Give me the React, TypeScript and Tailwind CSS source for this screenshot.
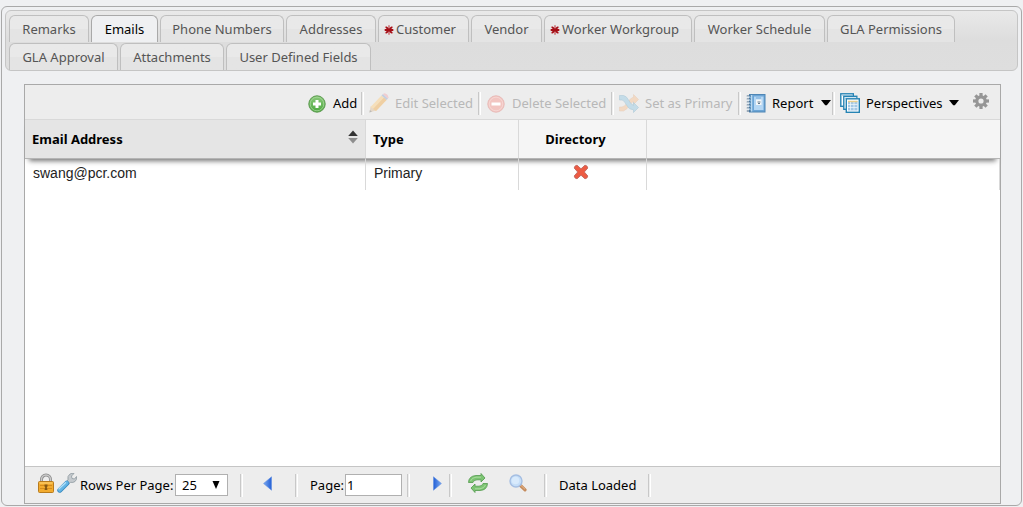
import { useState, type ReactNode } from "react";

type Tab = { label: string; width: string; required?: boolean };

const tabRows: Tab[][] = [
  [
    { label: "Remarks", width: "w-[80px]" },
    { label: "Emails", width: "w-[67px]" },
    { label: "Phone Numbers", width: "w-[124px]" },
    { label: "Addresses", width: "w-[90px]" },
    { label: "Customer", width: "w-[91px]", required: true },
    { label: "Vendor", width: "w-[71px]" },
    { label: "Worker Workgroup", width: "w-[148px]", required: true },
    { label: "Worker Schedule", width: "w-[131px]" },
    { label: "GLA Permissions", width: "w-[128px]" },
  ],
  [
    { label: "GLA Approval", width: "w-[109px]" },
    { label: "Attachments", width: "w-[104px]" },
    { label: "User Defined Fields", width: "w-[145px]" },
  ],
];

function RequiredMark() {
  return (
    <svg width="10" height="10" viewBox="0 0 10 10" className="mt-[2px] shrink-0" aria-hidden="true">
      <path d="M5 .3v9.400M.3 5h9.400M1.400 1.600l7.200 6.800M1.400 8.400l7.200-6.800" stroke="#cf7d80" strokeWidth="1.800" />
      <path d="M2.200 2l5.600 6M2.200 8l5.600-6M1 5h8" stroke="#a40d15" strokeWidth="1.800" />
    </svg>
  );
}

function AddIcon() {
  return (
    <svg width="20" height="20" viewBox="0 0 20 20" aria-hidden="true">
      <defs>
        <linearGradient id="add" x1="0" y1="0" x2="0" y2="1">
          <stop offset="0" stopColor="#8cc97c" />
          <stop offset="1" stopColor="#4ba83e" />
        </linearGradient>
      </defs>
      <circle cx="10" cy="11" r="8.2" fill="url(#add)" stroke="#5c9a50" />
      <circle cx="10" cy="11" r="6.8" fill="none" stroke="#a5d799" strokeWidth=".8" />
      <path d="M10 7v8M6 11h8" stroke="#fff" strokeWidth="3" />
    </svg>
  );
}

function PencilIcon() {
  return (
    <svg width="20" height="20" viewBox="0 0 20 20" aria-hidden="true">
      <path d="M.5 19.500l1-6 4 .5 1.500 3.500z" fill="#e5d8c8" />
      <path d="M1.500 14L12.500 2.500l5 4.500L7 18l-2.500-2z" fill="#f5dfbb" />
      <path d="M4 16L15 4.500 17.500 7 7 18z" fill="#efcfa3" />
      <path d="M12.500 2.500L14 1l5 4.500L17.500 7z" fill="#c6cfdf" />
      <path d="M14 1l1.300-.8q3.500.5 4.200 4L19 5.500z" fill="#f0cdd0" />
      <path d="M.5 19.500l.4-2.500 2 1.600z" fill="#b9b9b9" />
    </svg>
  );
}

function DeleteIcon() {
  return (
    <svg width="20" height="20" viewBox="0 0 20 20" aria-hidden="true">
      <circle cx="10" cy="11" r="8.2" fill="#f2c5c1" stroke="#e8bbb8" />
      <circle cx="10" cy="11" r="6.8" fill="none" stroke="#f7dad7" strokeWidth=".8" />
      <path d="M5.500 11h9" stroke="#fff" strokeWidth="3" />
    </svg>
  );
}

function ShuffleIcon() {
  return (
    <svg width="20" height="20" viewBox="0 0 20 20" aria-hidden="true">
      <path d="M.5 14H3q3-.5 5-4t5.500-5.500h1V1.500l5 5-5 5V8.500Q12.500 9 10.500 12.500T4.500 18h-4z" fill="#f2d9c3" stroke="#e6cdb8" strokeWidth=".5" />
      <path d="M.5 2.500h4Q7.500 3 9.500 7t5 5.500v-3l5 5-5 5v-2.700Q10 17 7.500 12T3 7H.5z" fill="#c4dce8" stroke="#b0cbd9" strokeWidth=".6" />
    </svg>
  );
}

function ReportIcon() {
  return (
    <svg width="20" height="20" viewBox="0 0 20 20" aria-hidden="true">
      <rect x="3.500" y="1.500" width="15.500" height="17.500" fill="#6ca5d6" stroke="#4f86b5" />
      <path d="M5.500 2v16.500" stroke="#b9d8f0" strokeWidth="1.500" />
      <rect x="8" y="3.500" width="9.500" height="13.500" fill="#b5d7f4" />
      <rect x="10" y="6.500" width="5.500" height="5.500" fill="#f5f7f8" />
      <path d="M10 5h5" stroke="#75a8d6" />
      <path d="M11.500 9h3M12 10.500h2" stroke="#667b8c" />
      <path d="M.8 3h4M.8 6h4M.8 9h4M.8 12h4M.8 15h4M.8 18h4" stroke="#426583" strokeWidth="1.200" />
      <path d="M1 4h3M1 7h3M1 10h3M1 13h3M1 16h3" stroke="#d6e8f5" />
    </svg>
  );
}

function PerspectivesIcon() {
  return (
    <svg width="20" height="20" viewBox="0 0 20 20" aria-hidden="true">
      <rect x=".8" y=".8" width="12.500" height="12.500" fill="#fff" stroke="#2684b4" strokeWidth="1.400" />
      <path d="M1.500 2.300h11" stroke="#a8cde3" />
      <rect x="3.800" y="3.300" width="13" height="13" fill="#fff" stroke="#2684b4" strokeWidth="1.400" />
      <path d="M4.500 5h12" stroke="#a8cde3" />
      <rect x="6.300" y="5.800" width="13" height="13.500" fill="#fff" stroke="#2684b4" strokeWidth="1.400" />
      <rect x="8" y="8" width="9.500" height="9.500" fill="#a5c8e5" />
      <path d="M8 8.500h9.500" stroke="#e9cf8c" strokeWidth="1.500" />
      <path d="M8 11.500h9.500M8 14.500h9.500M10.500 9v8.500M14 9v8.500" stroke="#f2f9fd" strokeWidth=".7" />
    </svg>
  );
}

const gearAngles = [0, 45, 90, 135, 180, 225, 270, 315];

function GearIcon() {
  return (
    <svg width="16" height="16" viewBox="0 0 16 16" aria-hidden="true">
      <g fill="#969696">
        {gearAngles.map((angle) => (
          <rect key={angle} x="6.400" y="0" width="3.200" height="4" transform={`rotate(${angle} 8 8)`} />
        ))}
      </g>
      <circle cx="8" cy="8" r="4.200" fill="none" stroke="#969696" strokeWidth="3.200" />
    </svg>
  );
}

function CrossIcon() {
  return (
    <svg width="16" height="16" viewBox="0 0 16 16" role="img" aria-label="No">
      <path d="M4 1.200L8 4.800l4-3.600q2.500.3 2.800 2.800L11.300 8l3.500 4q-.3 2.500-2.800 2.800L8 11.200l-4 3.600q-2.500-.3-2.800-2.800L4.700 8 1.200 4Q1.500 1.500 4 1.200z" fill="#ed5b43" stroke="#bf675e" strokeWidth=".9" strokeLinejoin="round" />
    </svg>
  );
}

function LockIcon() {
  return (
    <svg width="18" height="20" viewBox="0 0 18 20" aria-hidden="true">
      <path d="M4.500 10V6.500a4.500 4.500 0 0 1 9 0V10" fill="none" stroke="#8b8b8b" strokeWidth="3" />
      <path d="M4.500 10V6.500a4.500 4.500 0 0 1 9 0V10" fill="none" stroke="#c9c9c9" strokeWidth="1.400" />
      <rect x="1.500" y="8.500" width="15" height="11" rx="1" fill="#f2ab2e" stroke="#b87b1c" />
      <path d="M2.500 10h13" stroke="#ffd77c" />
      <path d="M3 12.500h12M3 15.500h12" stroke="#d58c1c" />
      <path d="M7.500 11.500h3v2l-.7.700.7 2.800h-3l.7-2.800-.7-.7z" fill="#855814" />
    </svg>
  );
}

function WrenchIcon() {
  return (
    <svg width="20" height="20" viewBox="0 0 20 20" aria-hidden="true">
      <path d="M8.500 9.500L11 7q-1-4 2-6 2-1.200 4-.5L14.500 3l.5 2.500 2.500.5L19.500 3.500q.5 3.500-1.500 5-2 1.500-4.500.8L10.800 12z" fill="#c5cace" stroke="#8e999f" strokeWidth=".8" />
      <path d="M2.800 17.200l7-7" stroke="#3a8bc0" strokeWidth="5" strokeLinecap="round" />
      <path d="M2.800 17l7-7" stroke="#64b5e6" strokeWidth="3.600" strokeLinecap="round" />
      <path d="M2 15.800l6.500-6" stroke="#b5e0f7" strokeWidth="1.300" strokeLinecap="round" />
    </svg>
  );
}

function PageArrow({ flip = false }: { flip?: boolean }) {
  return (
    <svg width="9" height="15" viewBox="0 0 9 15" className={flip ? "rotate-180" : ""} aria-hidden="true">
      <defs>
        <linearGradient id={flip ? "arrow-next" : "arrow-prev"} x1="0" y1="0" x2="1" y2="0">
          <stop offset="0" stopColor="#7aa9f0" />
          <stop offset="1" stopColor="#2460d6" />
        </linearGradient>
      </defs>
      <path d="M8.500.8v13.400L.6 7.500z" fill={flip ? "url(#arrow-next)" : "url(#arrow-prev)"} stroke="#5f8fe0" strokeWidth=".6" />
    </svg>
  );
}

function RefreshIcon() {
  return (
    <svg width="20" height="20" viewBox="0 0 20 20" aria-hidden="true">
      <g fill="#7cc472" stroke="#529a4c" strokeWidth=".8" strokeLinejoin="round">
        <path d="M.5 9.500Q.8 3 8 2.500h5V.5L17 5l-4 4V6.800H9Q5.500 7 5 9.500z" />
        <path d="M19.500 10.500Q19.200 17 12 17.500H7v2L3 15l4-4v2.200h4q3.500-.2 4-2.700z" />
      </g>
      <path d="M2.500 8Q4 4.500 8 4.200h5M17.500 12q-1.500 3.500-5.500 3.800H7" fill="none" stroke="#aadba0" />
    </svg>
  );
}

function SearchIcon() {
  return (
    <svg width="18" height="18" viewBox="0 0 18 18" aria-hidden="true">
      <path d="M11.500 11.500l4.500 4.300" stroke="#c58b5c" strokeWidth="3.200" strokeLinecap="round" />
      <path d="M11.800 11.300l4 3.800" stroke="#e6b78a" strokeWidth="1" strokeLinecap="round" />
      <circle cx="7" cy="7" r="6" fill="#c5def8" stroke="#a5bee2" strokeWidth="1.400" />
      <circle cx="6.500" cy="6.500" r="3.800" fill="#d8eafc" />
    </svg>
  );
}

function Caret() {
  return (
    <svg width="10" height="6" viewBox="0 0 10 6" aria-hidden="true">
      <path d="M0 0h10L5.800 5.200H4.200z" fill="#000" />
    </svg>
  );
}

function Separator() {
  return <div className="h-[23px] w-[3px] shrink-0 border-l border-r border-l-[#c8c8c8] border-r-white" />;
}

function ToolButton({
  icon,
  label,
  width,
  disabled = false,
  menu = false,
}: {
  icon: ReactNode;
  label: string;
  width: string;
  disabled?: boolean;
  menu?: boolean;
}) {
  return (
    <button
      type="button"
      disabled={disabled}
      className={`flex h-6 shrink-0 items-center gap-[6px] whitespace-nowrap pl-1 ${width} ${disabled ? "text-[#b8b8b8]" : "text-black"}`}
    >
      {icon}
      <span className={menu ? "flex flex-1 items-center justify-between" : ""}>
        {label}
        {menu && <Caret />}
      </span>
    </button>
  );
}

export default function App() {
  const [active, setActive] = useState("Emails");

  return (
    <div className="flex min-h-screen flex-col bg-[#eff0f2] px-px pt-[6px] pb-px font-['Noto_Sans',sans-serif] text-[13px] leading-5 text-black">
      <main className="flex flex-1 flex-col rounded-[6px] border border-[#a9a9a9] px-[3px] pt-[3px]">
        <nav
          role="tablist"
          aria-label="Details"
          className="flex flex-col gap-px rounded-[6px] border border-[#c5c5c5] bg-linear-to-b from-[#e9e9e9] via-[#dddddd] to-[#dedede] px-[3px] pt-1"
        >
          {tabRows.map((row, index) => (
            <div key={index} className="flex flex-wrap gap-[2px]">
              {row.map((tab) => (
                <button
                  key={tab.label}
                  type="button"
                  role="tab"
                  aria-selected={active === tab.label}
                  onClick={() => setActive(tab.label)}
                  className={`flex h-[27px] items-center gap-[2px] whitespace-nowrap rounded-t-[6px] border border-b-0 ${tab.width} ${
                    tab.required ? "pl-[5px]" : "justify-center"
                  } ${
                    active === tab.label
                      ? "border-[#a9a9a9] bg-[#eff0f2] text-black"
                      : "border-[#bfbfbf] bg-linear-to-b from-[#e9e9e9] from-50% to-[#e4e4e4] to-50% text-[#555]"
                  }`}
                >
                  {tab.required && <RequiredMark />}
                  {tab.label}
                </button>
              ))}
            </div>
          ))}
        </nav>

        <section className="mt-[13px] mr-[17px] mb-px ml-[19px] flex flex-1 flex-col border border-[#a9a9a9] bg-white">
          <div className="flex h-[34px] shrink-0 items-center justify-end gap-px bg-[#ededed] pt-[2px] pr-[11px]">
            <ToolButton icon={<AddIcon />} label="Add" width="w-[57px]" />
            <Separator />
            <ToolButton icon={<PencilIcon />} label="Edit Selected" width="w-[112px]" disabled />
            <Separator />
            <ToolButton icon={<DeleteIcon />} label="Delete Selected" width="w-[128px]" disabled />
            <Separator />
            <ToolButton icon={<ShuffleIcon />} label="Set as Primary" width="w-[122px]" disabled />
            <Separator />
            <ToolButton icon={<ReportIcon />} label="Report" width="w-[89px]" menu />
            <Separator />
            <ToolButton icon={<PerspectivesIcon />} label="Perspectives" width="w-[123px]" menu />
            <button type="button" aria-label="Settings" className="ml-[13px] pb-1">
              <GearIcon />
            </button>
          </div>

          <div className="flex-1">
            <table className="w-full table-fixed border-separate border-spacing-0 text-left">
              <colgroup>
                <col className="w-[341px]" />
                <col className="w-[153px]" />
                <col className="w-[128px]" />
                <col />
              </colgroup>
              <thead className="bg-[#f5f5f5] shadow-[0_6px_5px_-4px_rgba(0,0,0,0.55)]">
                <tr className="h-10">
                  <th className="border-y border-r border-[#d9d9d9] border-b-[#b5b5b5] bg-[#e5e5e5] px-[7px]">
                    <div className="flex items-center justify-between">
                      Email Address
                      <svg width="10" height="14" viewBox="0 0 10 14" className="mb-1" aria-hidden="true">
                        <path d="M5 .5L9.800 6H.2z" fill="#333" />
                        <path d="M.2 8h9.600L5 13.500z" fill="#8e8e8e" />
                      </svg>
                    </div>
                  </th>
                  <th className="border-y border-r border-[#d9d9d9] border-b-[#b5b5b5] px-[7px]">Type</th>
                  <th className="border-y border-r border-[#d9d9d9] border-b-[#b5b5b5] pr-[14px] text-center">Directory</th>
                  <td className="border-y border-[#d9d9d9] border-b-[#b5b5b5]" />
                </tr>
              </thead>
              <tbody className="font-['Liberation_Sans',Arial,sans-serif] text-[14px] text-[#222]">
                <tr className="h-[31px]">
                  <td className="border-r border-[#d9d9d9] px-2 pb-1">swang@pcr.com</td>
                  <td className="border-r border-[#d9d9d9] px-2 pb-1">Primary</td>
                  <td className="border-r border-[#d9d9d9] pr-[4px] pb-[6px]">
                    <div className="flex justify-center">
                      <CrossIcon />
                    </div>
                  </td>
                  <td className="border-r border-[#d9d9d9]" />
                </tr>
              </tbody>
            </table>
          </div>

          <footer className="flex h-[37px] shrink-0 items-center border-t border-[#c5c5c5] bg-[#ededed] pl-3">
            <button type="button" aria-label="Lock" className="pb-1">
              <LockIcon />
            </button>
            <button type="button" aria-label="Configure" className="ml-[2px] pb-1">
              <WrenchIcon />
            </button>
            <label htmlFor="rows" className="ml-[3px] w-[95px] whitespace-nowrap">
              Rows Per Page:
            </label>
            <div className="relative">
              <select
                id="rows"
                defaultValue="25"
                className="block h-[22px] w-[53px] appearance-none border border-[#b0b0b0] bg-white pl-[6px]"
              >
                <option>10</option>
                <option>25</option>
                <option>50</option>
              </select>
              <svg width="8" height="8" viewBox="0 0 8 8" className="pointer-events-none absolute top-[7px] right-2" aria-hidden="true">
                <path d="M.5 0h7L4 8z" />
              </svg>
            </div>
            <div className="ml-3">
              <Separator />
            </div>
            <button type="button" aria-label="Previous page" className="mr-[23px] ml-5 pb-1">
              <PageArrow />
            </button>
            <Separator />
            <label htmlFor="page" className="ml-3 w-[35px] whitespace-nowrap">
              Page:
            </label>
            <input id="page" defaultValue="1" className="h-[22px] w-[57px] border border-[#b0b0b0] bg-white pl-px" />
            <div className="ml-[5px]">
              <Separator />
            </div>
            <button type="button" aria-label="Next page" className="mr-[7px] ml-[23px] pb-1">
              <PageArrow flip />
            </button>
            <Separator />
            <button type="button" aria-label="Refresh" className="ml-4 pb-1">
              <RefreshIcon />
            </button>
            <button type="button" aria-label="Search" className="mr-[17px] ml-[21px] pb-1">
              <SearchIcon />
            </button>
            <Separator />
            <span className="ml-3 w-[89px] whitespace-nowrap">Data Loaded</span>
            <Separator />
          </footer>
        </section>
      </main>
    </div>
  );
}
